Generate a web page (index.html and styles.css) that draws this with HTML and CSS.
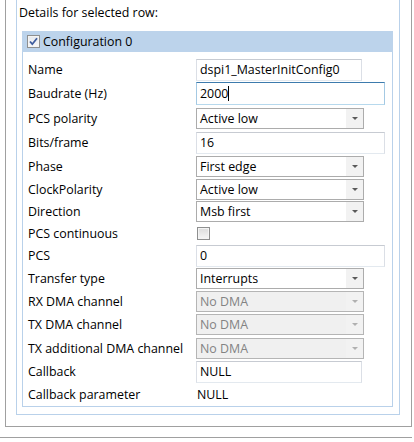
FILE: index.html
```html
<!DOCTYPE html>
<html>
<head>
<meta charset="utf-8">
<link rel="stylesheet" href="styles.css">
</head>
<body>
<div class="frame">
  <div class="panel">
    <div class="caption">Details for selected row:</div>
    <div class="table">
      <div class="head">
        <span class="cb">
          <svg width="13" height="13" viewBox="0 0 13 13"><path d="M3 6.5 L5.3 9.2 L10 3.3" fill="none" stroke="#3f5d9e" stroke-width="1.8"/></svg>
        </span>
        <span class="head-text">Configuration 0</span>
      </div>
      <div class="body">
        <div class="row h23"><span class="lbl">Name</span><div class="tb short">dspi1_MasterInitConfig0</div></div>
        <div class="row h25"><span class="lbl">Baudrate (Hz)</span><div class="tb long focus">2000<span class="caret"></span></div></div>
        <div class="row h24"><span class="lbl">PCS polarity</span><div class="sel">Active low<span class="btn"><span class="arrow"></span></span></div></div>
        <div class="row h25"><span class="lbl">Bits/frame</span><div class="tb long">16</div></div>
        <div class="row h23"><span class="lbl">Phase</span><div class="sel">First edge<span class="btn"><span class="arrow"></span></span></div></div>
        <div class="row h22"><span class="lbl">ClockPolarity</span><div class="sel">Active low<span class="btn"><span class="arrow"></span></span></div></div>
        <div class="row h23"><span class="lbl">Direction</span><div class="sel">Msb first<span class="btn"><span class="arrow"></span></span></div></div>
        <div class="row h21"><span class="lbl">PCS continuous</span><span class="cb plain"></span></div>
        <div class="row h23"><span class="lbl">PCS</span><div class="tb long">0</div></div>
        <div class="row h23"><span class="lbl">Transfer type</span><div class="sel">Interrupts<span class="btn"><span class="arrow"></span></span></div></div>
        <div class="row h23"><span class="lbl">RX DMA channel</span><div class="sel disabled">No DMA<span class="btn"><span class="arrow"></span></span></div></div>
        <div class="row h23"><span class="lbl">TX DMA channel</span><div class="sel disabled">No DMA<span class="btn"><span class="arrow"></span></span></div></div>
        <div class="row h24"><span class="lbl">TX additional DMA channel</span><div class="sel disabled">No DMA<span class="btn"><span class="arrow"></span></span></div></div>
        <div class="row h23"><span class="lbl">Callback</span><div class="tb short">NULL</div></div>
        <div class="row h23"><span class="lbl">Callback parameter</span><span class="val">NULL</span></div>
      </div>
    </div>
  </div>
</div>
<div class="rule"></div>
</body>
</html>
```

FILE: styles.css
```css
* { box-sizing: border-box; }
html, body { margin: 0; padding: 0; background: #fff; }
body {
  font-family: "Open Sans", "Noto Sans", sans-serif;
  font-size: 12.4px;
  color: #000;
  width: 414px;
  height: 442px;
  overflow: hidden;
}
.frame {
  margin-left: 5px;
  width: 407px;
  height: 427px;
  border: 1px solid #a0a0a0;
  border-top: none;
  padding-left: 10px;
}
.panel {
  width: 384px;
  height: 415px;
  border: 1px solid #b9d1ea;
  border-top: none;
}
.caption {
  height: 31px;
  padding: 5px 0 0 2px;
  line-height: 16px;
}
.table {
  margin-left: 5px;
  width: 371px;
  border: 1px solid #b9d1ea;
  border-top: none;
}
.head {
  height: 21px;
  margin: 0 -1px;
  background: #bcd3eb;
  display: flex;
  align-items: center;
  padding-left: 5px;
  gap: 3px;
}
.cb {
  width: 13px;
  height: 13px;
  border: 1px solid #8e8f8f;
  background: linear-gradient(#dcdcdc, #f6f6f6);
  box-shadow: inset 0 0 0 1px #f4f4f4;
  display: inline-flex;
  position: relative;
}
.cb svg { position: absolute; left: -1px; top: -1px; }
.head .cb { background: linear-gradient(#e6e9ee, #f8f8f8); }
.head-text { line-height: 16px; }
.body { padding: 6px 0 0 5px; }
.row {
  display: flex;
  align-items: center;
}
.h21 { height: 21px; }
.h22 { height: 22px; }
.h23 { height: 23px; }
.h24 { height: 24px; }
.h25 { height: 25px; }
.lbl { width: 168px; flex: none; white-space: nowrap; }
.tb {
  height: 22px;
  border: 1px solid #dbdfe6;
  border-top-color: #c7cbd2;
  border-bottom-color: #e3e9ef;
  padding-left: 3px;
  display: flex;
  align-items: center;
  background: #fff;
  white-space: nowrap;
}
.tb.short { width: 166px; }
.tb.long { width: 189px; }
.tb.focus {
  height: 23px;
  border-color: #a4c9e3;
  border-top-color: #3d7bad;
  border-bottom-color: #b7d9ed;
}
.caret { display: inline-block; width: 1px; height: 15px; background: #000; }
.sel {
  width: 168px;
  height: 21px;
  border: 1px solid #acacac;
  padding-left: 3px;
  display: flex;
  align-items: center;
  background: #fff;
  position: relative;
}
.sel.disabled { background: #f0f0f0; color: #838383; border-color: #b5b5b5; }
.btn {
  position: absolute;
  right: 0;
  top: 0;
  bottom: 0;
  width: 17px;
  background: #f2f2f2;
  display: flex;
  align-items: center;
  justify-content: center;
}
.arrow {
  width: 0;
  height: 0;
  border-left: 3px solid transparent;
  border-right: 3px solid transparent;
  border-top: 3px solid #5a5a5a;
}
.sel.disabled .arrow { border-top-color: #b0b0b0; }
.cb.plain { margin-left: 1px; }
.val { padding-left: 1px; }
.rule {
  margin-top: 10px;
  width: 412px;
  height: 1px;
  background: #a0a0a0;
}
```
